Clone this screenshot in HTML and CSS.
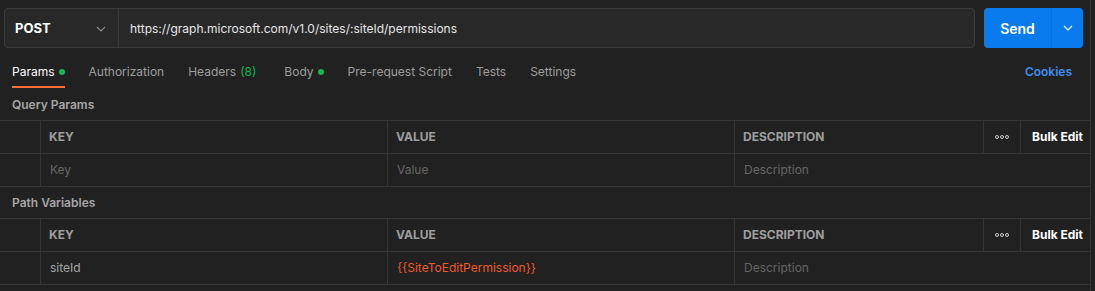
FILE: index.html
```html
<!DOCTYPE html>
<html lang="en">
<head>
  <meta charset="UTF-8">
  <title>Request - Params</title>
  <link rel="stylesheet" href="styles.css">
</head>
<body>

<div class="pane">

  <!-- Request bar -->
  <div class="request-bar">
    <div class="url-group">
      <div class="method">
        <span>POST</span>
        <svg class="chev" width="10" height="6" viewBox="0 0 10 6"><path d="M1 1l4 4 4-4" fill="none" stroke="#8c8c8c" stroke-width="1.1"/></svg>
      </div>
      <div class="url">https://graph.microsoft.com/v1.0/sites/:siteId/permissions</div>
    </div>
    <div class="send">
      <span class="send-label">Send</span>
      <span class="send-more">
        <svg width="10" height="6" viewBox="0 0 10 6"><path d="M1 1l4 4 4-4" fill="none" stroke="#fff" stroke-width="1.1"/></svg>
      </span>
    </div>
  </div>

  <!-- Tabs -->
  <div class="tabs">
    <div class="tab active">Params <span class="dot"></span></div>
    <div class="tab">Authorization</div>
    <div class="tab">Headers <span class="count">(8)</span></div>
    <div class="tab">Body <span class="dot"></span></div>
    <div class="tab">Pre-request Script</div>
    <div class="tab">Tests</div>
    <div class="tab">Settings</div>
    <div class="cookies">Cookies</div>
  </div>

  <!-- Query Params -->
  <div class="section-title">Query Params</div>
  <div class="grid">
    <div class="cell"></div>
    <div class="cell head">KEY</div>
    <div class="cell head">VALUE</div>
    <div class="cell head">DESCRIPTION</div>
    <div class="cell more"><span></span><span></span><span></span></div>
    <div class="cell bulk">Bulk Edit</div>

    <div class="cell"></div>
    <div class="cell placeholder">Key</div>
    <div class="cell placeholder">Value</div>
    <div class="cell placeholder wide">Description</div>
  </div>

  <!-- Path Variables -->
  <div class="section-title">Path Variables</div>
  <div class="grid">
    <div class="cell"></div>
    <div class="cell head">KEY</div>
    <div class="cell head">VALUE</div>
    <div class="cell head">DESCRIPTION</div>
    <div class="cell more"><span></span><span></span><span></span></div>
    <div class="cell bulk">Bulk Edit</div>

    <div class="cell"></div>
    <div class="cell text">siteId</div>
    <div class="cell variable">{{SiteToEditPermission}}</div>
    <div class="cell placeholder wide">Description</div>
  </div>

</div>

</body>
</html>
```

FILE: styles.css
```css
body { margin: 0; background: #212121; font-family: Inter, "Noto Sans", sans-serif; font-size: 12px; color: #a6a6a6; }
.pane { width: 1090px; height: 291px; border-right: 1px solid #333; overflow: hidden; }

/* Request bar */
.request-bar { display: flex; padding: 8px 7px 0 4px; gap: 9px; }
.url-group {
  flex: 1;
  display: flex;
  height: 40px;
  box-sizing: border-box;
  border: 1px solid #3b3b3b;
  border-radius: 4px;
  background: #282828;
}
.method {
  width: 114px;
  display: flex;
  align-items: center;
  justify-content: space-between;
  padding: 0 12px 0 10px;
  box-sizing: border-box;
  border-right: 1px solid #3b3b3b;
  color: #fff;
  font-size: 13px;
  font-weight: 700;
}
.chev { margin-top: 1px; }
.url { display: flex; align-items: center; padding-left: 11px; color: #e6e6e6; }
.send {
  width: 99px;
  height: 40px;
  display: flex;
  background: #097bed;
  border-radius: 4px;
  color: #fff;
}
.send-label { flex: 1; display: flex; align-items: center; justify-content: center; font-size: 14px; font-weight: 600; border-right: 1px solid #0a6ed4; }
.send-more { width: 31px; display: flex; align-items: center; justify-content: center; }

/* Tabs */
.tabs { display: flex; align-items: flex-end; gap: 24px; padding: 0 18px 0 12px; }
.tab {
  padding: 16px 0 6px;
  line-height: 16px;
  border-bottom: 2px solid transparent;
  color: #9e9e9e;
  display: flex;
  align-items: center;
}
.tab.active { color: #fff; border-bottom-color: #ff6c37; }
.dot { width: 6px; height: 6px; border-radius: 50%; background: #0cbb52; margin-left: 4px; }
.count { color: #0cbb52; margin-left: 4px; padding-right: 4px; }
.cookies { margin-left: auto; padding-bottom: 8px; line-height: 16px; color: #3f8ff0; font-weight: 600; }

/* Sections */
.section-title { height: 32px; padding-top: 1px; box-sizing: border-box; line-height: 31px; padding-left: 12px; font-weight: 600; color: #a6a6a6; }

.grid {
  display: grid;
  grid-template-columns: 41px 347px 347px 249px 37px 69px;
  grid-auto-rows: 33px;
}
.cell {
  box-sizing: border-box;
  border-top: 1px solid #363636;
  border-right: 1px solid #363636;
  display: flex;
  align-items: center;
  padding-left: 8px;
  padding-bottom: 1px;
}
.cell:nth-child(6), .cell.wide { border-right: none; }
.grid .cell:nth-child(n+7) { border-bottom: 1px solid #363636; height: 34px; padding-bottom: 2px; }
.wide { grid-column: span 3; }
.head { font-weight: 700; color: #9e9e9e; }
.placeholder { color: #666; padding-left: 9px; }
.text { color: #a6a6a6; padding-left: 9px; }
.variable { color: #f0592a; padding-left: 9px; }
.bulk { color: #fff; font-weight: 700; padding-left: 11px; }
.more { justify-content: center; gap: 1px; padding: 0 0 1px; }
.more span { width: 2px; height: 2px; border: 1px solid #ccc; border-radius: 50%; }
```
